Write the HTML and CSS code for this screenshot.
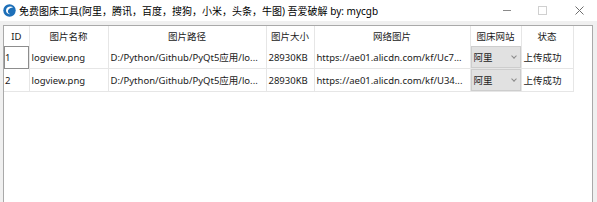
FILE: index.html
```html
<!DOCTYPE html>
<html>
<head>
<meta charset="utf-8">
<link rel="stylesheet" href="styles.css">
</head>
<body>
<div class="window">
  <div class="titlebar">
    <svg class="app-icon" width="13" height="13" viewBox="0 0 13 13">
      <circle cx="6.5" cy="6.5" r="6.2" fill="#1d6fb8"/>
      <path d="M10.2 3.2 C7 1.6 3 3.2 3 6.6 C3 8.8 4.8 10.4 7.2 10.2 C5.4 9.6 4.6 8.2 5 6.6 C5.6 4.6 8 3.6 10.2 3.2 Z" fill="#ffffff"/>
    </svg>
    <span class="title">免费图床工具(阿里，腾讯，百度，搜狗，小米，头条，牛图) 吾爱破解 by: mycgb</span>
    <div class="controls">
      <span class="ctl min"></span>
      <span class="ctl max"></span>
      <span class="ctl close">
        <svg width="9" height="9" viewBox="0 0 9 9"><path d="M0.5 0.5 L8.5 8.5 M8.5 0.5 L0.5 8.5" stroke="#6e6e6e" stroke-width="1"/></svg>
      </span>
    </div>
  </div>
  <div class="content">
    <div class="frame">
      <table class="grid">
        <colgroup>
          <col class="c-id"><col class="c-name"><col class="c-path"><col class="c-size"><col class="c-url"><col class="c-site"><col class="c-status">
        </colgroup>
        <thead>
          <tr><th>ID</th><th>图片名称</th><th>图片路径</th><th>图片大小</th><th>网络图片</th><th>图床网站</th><th>状态</th></tr>
        </thead>
        <tbody>
          <tr>
            <td class="focus">1</td><td>logview.png</td><td>D:/Python/Github/PyQt5应用/lo...</td><td>28930KB</td><td>https://ae01.alicdn.com/kf/Uc7...</td>
            <td class="combo-cell"><div class="combo"><span>阿里</span><span class="chev"></span></div></td><td>上传成功</td>
          </tr>
          <tr>
            <td>2</td><td>logview.png</td><td>D:/Python/Github/PyQt5应用/lo...</td><td>28930KB</td><td>https://ae01.alicdn.com/kf/U34...</td>
            <td class="combo-cell"><div class="combo"><span>阿里</span><span class="chev"></span></div></td><td>上传成功</td>
          </tr>
        </tbody>
      </table>
    </div>
  </div>
</div>
</body>
</html>
```

FILE: styles.css
```css
html, body {
  margin: 0;
  padding: 0;
}
body {
  background: #f0f0f0;
  font-family: "Noto Sans", "Noto Sans CJK SC", sans-serif;
  font-size: 9.5px;
  color: #1a1a1a;
  width: 597px;
  height: 202px;
  overflow: hidden;
}
.window {
  height: 202px;
  display: flex;
  flex-direction: column;
}
.titlebar {
  height: 21px;
  flex: none;
  background: #ffffff;
  display: flex;
  align-items: center;
  padding-left: 3px;
}
.app-icon {
  margin-right: 3px;
  flex: none;
}
.title {
  white-space: nowrap;
  color: #000;
  font-size: 10px;
}
.controls {
  margin-left: auto;
  display: flex;
  align-items: center;
  height: 21px;
}
.ctl {
  display: block;
}
.min {
  width: 8px;
  height: 1px;
  background: #8a8a8a;
  margin-right: 27px;
}
.max {
  width: 7px;
  height: 7px;
  border: 1px solid #d0d0d0;
  margin-right: 28px;
}
.close {
  width: 9px;
  height: 9px;
  margin-right: 13px;
}
.close svg {
  display: block;
}
.content {
  flex: 1;
  min-height: 0;
  display: flex;
  flex-direction: column;
  padding: 4px 4px 0 3px;
}
.frame {
  flex: 1;
  min-height: 0;
  background: #ffffff;
  border: 1px solid #a9a9a9;
  border-bottom: none;
  overflow: hidden;
}
.grid {
  border-collapse: collapse;
  table-layout: fixed;
  width: 569px;
}
.c-id { width: 25px; }
.c-name { width: 79px; }
.c-path { width: 158px; }
.c-size { width: 48px; }
.c-url { width: 156px; }
.c-site { width: 51px; }
.c-status { width: 52px; }
th {
  font-weight: normal;
  height: 20px;
  padding: 0;
  text-align: center;
  border-right: 1px solid #e6e6e6;
  color: #1a1a1a;
}
td {
  height: 22px;
  padding: 0 0 0 2px;
  white-space: nowrap;
  overflow: hidden;
  border-right: 1px solid #e6e6e6;
  border-bottom: 1px solid #e6e6e6;
}
td:first-child {
  padding-left: 1px;
}
td.focus {
  outline: 1px solid #8d8d8d;
  outline-offset: -1px;
}
td.combo-cell {
  padding: 0;
}
.combo {
  height: 22px;
  box-sizing: border-box;
  background: #e1e1e1;
  border: 1px solid #cdcdcd;
  display: flex;
  align-items: center;
  padding-left: 2px;
}
.chev {
  margin-left: auto;
  margin-right: 4px;
  width: 3px;
  height: 3px;
  border-right: 1px solid #8a8a8a;
  border-bottom: 1px solid #8a8a8a;
  transform: rotate(45deg);
  margin-top: -2px;
}
```
